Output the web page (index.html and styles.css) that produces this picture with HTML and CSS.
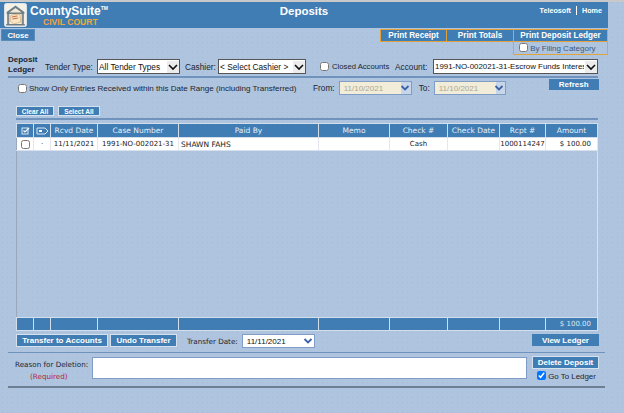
FILE: index.html
```html
<!DOCTYPE html>
<html lang="en">
<head>
    <meta charset="UTF-8">
    <meta name="viewport" content="width=device-width, initial-scale=1.0">
    <title>Deposits</title>
    <link rel="stylesheet" href="styles.css">
</head>
<body>
    <!-- Banner -->
    <header class="banner">
        <div class="brand">
            <svg class="brand-logo" width="23" height="24" viewBox="0 0 26 24" preserveAspectRatio="none">
                <rect x="0.5" y="0.5" width="25" height="23" rx="2" fill="#f4f1e6" stroke="#dfe6ee"/>
                <path d="M3 9 L13 2.5 L23 9 L23 11 L3 11 Z" fill="#6f7d86"/>
                <path d="M6 9.5 L13 5 L20 9.5 Z" fill="#efe8d6"/>
                <rect x="3.5" y="11" width="2.5" height="10" fill="#7f8b92"/>
                <rect x="20" y="11" width="2.5" height="10" fill="#7f8b92"/>
                <path d="M8 12 L18 11 L19 19 L11 21 L7 18 Z" fill="#f7e6c8" stroke="#d9a05c" stroke-width="0.7"/>
                <path d="M9 14 L15 13 M9.5 16 L16 15" stroke="#c9683f" stroke-width="1"/>
                <rect x="2.5" y="21" width="21" height="1.5" fill="#6f7d86"/>
            </svg>
            <div class="brand-text">
                <div class="brand-name">CountySuite<sup>TM</sup></div>
                <div class="brand-sub">CIVIL COURT</div>
            </div>
        </div>
        <h1 class="page-title">Deposits</h1>
        <nav class="top-links"><a>Teleosoft</a><a>Home</a></nav>
    </header>

    <!-- Close + print buttons -->
    <div class="toolbar">
        <button class="btn btn-close" type="button">Close</button>
        <div class="print-group">
            <div class="print-tabs">
                <button class="print-tab tab-receipt" type="button">Print Receipt</button>
                <button class="print-tab tab-totals" type="button">Print Totals</button>
                <button class="print-tab tab-ledger" type="button">Print Deposit Ledger</button>
            </div>
            <label class="by-filing"><input type="checkbox"> By Filing Category</label>
        </div>
    </div>

    <!-- Filters -->
    <div class="filter-row">
        <div class="ledger-title">Deposit<br>Ledger</div>
        <label class="field field-tender">Tender Type:
            <span class="pick pick-tender">
                <select><option>All Tender Types</option></select>
                <svg width="12" height="12" viewBox="0 0 12 12"><path d="M2 4 L6 8 L10 4" fill="none" stroke="#111" stroke-width="1.6"/></svg>
            </span>
        </label>
        <label class="field field-cashier">Cashier:
            <span class="pick pick-cashier">
                <select><option>&lt; Select Cashier &gt;</option></select>
                <svg width="12" height="12" viewBox="0 0 12 12"><path d="M2 4 L6 8 L10 4" fill="none" stroke="#111" stroke-width="1.6"/></svg>
            </span>
        </label>
        <label class="field field-closed"><input type="checkbox"> Closed Accounts</label>
        <label class="field field-account">Account:
            <span class="pick pick-account">
                <select><option>1991-NO-002021-31-Escrow Funds Interest</option></select>
                <svg width="12" height="12" viewBox="0 0 12 12"><path d="M2 4 L6 8 L10 4" fill="none" stroke="#111" stroke-width="1.6"/></svg>
            </span>
        </label>
    </div>

    <div class="date-row">
        <label class="field field-range"><input type="checkbox"> Show Only Entries Received within this Date Range (including Transferred)</label>
        <label class="field field-from">From:
            <span class="date-pick is-disabled">11/10/2021<svg width="10" height="8" viewBox="0 0 10 8"><path d="M1.5 2 L5 5.5 L8.5 2" fill="none" stroke="#3b62a8" stroke-width="1.8"/></svg></span>
        </label>
        <label class="field field-to">To:
            <span class="date-pick is-disabled">11/10/2021<svg width="10" height="8" viewBox="0 0 10 8"><path d="M1.5 2 L5 5.5 L8.5 2" fill="none" stroke="#3b62a8" stroke-width="1.8"/></svg></span>
        </label>
        <button class="btn btn-refresh" type="button">Refresh</button>
    </div>

    <div class="select-row">
        <button class="btn btn-small btn-clear" type="button">Clear All</button>
        <button class="btn btn-small btn-select" type="button">Select All</button>
    </div>

    <!-- Deposits grid -->
    <div class="grid-wrap">
        <table class="grid">
            <colgroup>
                <col class="c1"><col class="c2"><col class="c3"><col class="c4"><col class="c5">
                <col class="c6"><col class="c7"><col class="c8"><col class="c9"><col class="c10">
            </colgroup>
            <thead>
                <tr>
                    <th><svg width="9" height="8" viewBox="0 0 9 8"><rect x="1" y="1" width="6" height="6" fill="none" stroke="#dbe8f3"/><path d="M2.5 3.5 L4 5 L8 1" fill="none" stroke="#fff" stroke-width="1.2"/></svg></th>
                    <th><svg width="13" height="8" viewBox="0 0 13 8"><path d="M1 1 H9 L12 4 L9 7 H1 Z" fill="none" stroke="#dbe8f3"/><rect x="3" y="3" width="3" height="2" fill="#fff"/></svg></th>
                    <th>Rcvd Date</th>
                    <th>Case Number</th>
                    <th>Paid By</th>
                    <th>Memo</th>
                    <th>Check #</th>
                    <th>Check Date</th>
                    <th>Rcpt #</th>
                    <th>Amount</th>
                </tr>
            </thead>
            <tbody>
                <tr class="data-row">
                    <td class="center"><input type="checkbox"></td>
                    <td class="center">&middot;</td>
                    <td class="center">11/11/2021</td>
                    <td class="center">1991-NO-002021-31</td>
                    <td>SHAWN FAHS</td>
                    <td></td>
                    <td class="center">Cash</td>
                    <td></td>
                    <td class="center">1000114247</td>
                    <td class="right">$ 100.00</td>
                </tr>
                <tr class="filler-row"><td colspan="10"></td></tr>
            </tbody>
            <tfoot>
                <tr>
                    <td></td><td></td><td></td><td></td><td></td>
                    <td></td><td></td><td></td><td></td><td class="right">$ 100.00</td>
                </tr>
            </tfoot>
        </table>
    </div>

    <div class="transfer-row">
        <button class="btn btn-transfer" type="button">Transfer to Accounts</button>
        <button class="btn btn-undo" type="button">Undo Transfer</button>
        <label class="field field-transfer">Transfer Date:
            <span class="date-pick date-transfer">11/11/2021<svg width="10" height="8" viewBox="0 0 10 8"><path d="M1.5 2 L5 5.5 L8.5 2" fill="none" stroke="#3b62a8" stroke-width="1.8"/></svg></span>
        </label>
        <button class="btn btn-view" type="button">View Ledger</button>
    </div>

    <!-- Delete section -->
    <div class="delete-row">
        <div class="reason-label">Reason for Deletion:<div class="required">(Required)</div></div>
        <textarea class="reason-box"></textarea>
        <div class="delete-actions">
            <button class="btn btn-delete" type="button">Delete Deposit</button>
            <label class="go-ledger"><input type="checkbox" checked> Go To Ledger</label>
        </div>
    </div>
</body>
</html>
```
FILE: styles.css
```css
* {
    box-sizing: border-box;
}
html, body {
    height: 413px;
    overflow: hidden;
}
body {
    margin: 0;
    font-family: "Liberation Sans", Arial, sans-serif;
    font-size: 8.3px;
    color: #1d2530;
    background-color: #afc4de;
    background-image: radial-gradient(circle, #a6bbd8 0.6px, transparent 0.9px);
    background-size: 5px 5px;
    border-top: 2px solid #c9c9c9;
}
button {
    font-family: inherit;
    cursor: pointer;
}
input[type="checkbox"] {
    width: 9px;
    height: 9px;
    margin: 0;
    vertical-align: -1px;
}

/* banner */
.banner {
    display: grid;
    grid-template-columns: 1fr auto 1fr;
    align-items: start;
    width: 608px;
    height: 26px;
    background: #3f7db4;
}
.brand {
    display: flex;
    gap: 3px;
    padding: 1px 0 0 4px;
}
.brand-logo {
    display: block;
}
.brand-name {
    margin-top: 2px;
    font-size: 12px;
    font-weight: bold;
    line-height: 13px;
    color: #fff;
}
.brand-name sup {
    font-size: 5px;
    line-height: 0;
    vertical-align: 5px;
}
.brand-sub {
    margin-left: 13px;
    font-size: 8.6px;
    font-weight: bold;
    line-height: 9px;
    color: #f2a63c;
}
.page-title {
    margin: 3px 0 0;
    font-size: 11.5px;
    font-weight: bold;
    color: #fff;
}
.top-links {
    display: flex;
    justify-content: flex-end;
    align-items: center;
    gap: 5px;
    padding: 4px 6px 0 0;
    font-size: 7.2px;
    font-weight: bold;
    color: #fff;
}
.top-links a + a {
    padding-left: 5px;
    border-left: 1px solid #fff;
}

/* buttons */
.btn {
    padding: 0;
    border: 1px solid #d6e1ee;
    background: #3f7db4;
    color: #fff;
    font-weight: bold;
    font-size: 8px;
    white-space: nowrap;
}

/* toolbar */
.toolbar {
    display: flex;
    justify-content: space-between;
    align-items: flex-start;
    width: 608px;
    height: 26px;
}
.btn-close {
    width: 34px;
    height: 12px;
    margin: 1px 0 0 1px;
    border-color: #5a8cba;
    font-size: 7.8px;
}
.print-group {
    width: 228px;
}
.print-tabs {
    display: flex;
    height: 13px;
    margin-top: 1px;
}
.print-tab {
    height: 13px;
    padding: 0;
    border: 1px solid #e3a33c;
    border-left-width: 0;
    background: #3f7db4;
    color: #fff;
    font-weight: bold;
    font-size: 8.2px;
    white-space: nowrap;
}
.tab-receipt {
    width: 67px;
    border-left-width: 1px;
}
.tab-totals {
    width: 67px;
}
.tab-ledger {
    width: 94px;
}
.by-filing {
    display: block;
    width: 95px;
    height: 13px;
    margin-left: auto;
    padding: 1px 0 0 5px;
    border: 1px solid #e3a33c;
    border-top: 0;
    font-size: 8px;
    color: #3f5a80;
    white-space: nowrap;
}

/* filter rows */
.filter-row {
    display: flex;
    align-items: flex-end;
    width: 590px;
    height: 24px;
    margin-left: 8px;
    padding-bottom: 2px;
    border-bottom: 2px solid #6f93bd;
}
.ledger-title {
    width: 37px;
    margin-bottom: -1px;
    font-size: 8px;
    font-weight: bold;
    line-height: 10px;
    color: #1d2530;
}
.field {
    display: flex;
    align-items: center;
    white-space: nowrap;
}
.field-tender {
    width: 135px;
    justify-content: space-between;
}
.field-cashier {
    width: 121px;
    justify-content: space-between;
    margin-left: 5px;
}
.field-closed {
    gap: 3px;
    margin-left: 14px;
    height: 15px;
    font-size: 7.7px;
}
.field-account {
    width: 203px;
    justify-content: space-between;
    margin-left: auto;
}
.pick {
    position: relative;
    display: block;
    height: 15px;
}
.pick select {
    display: block;
    width: 100%;
    height: 100%;
    padding: 0 13px 0 1px;
    border: 1px solid #555;
    border-radius: 0;
    background: #fff;
    appearance: none;
    font-family: inherit;
    font-size: 8.3px;
    color: #111;
}
.pick svg {
    position: absolute;
    top: 2px;
    right: 1px;
    background: #ececec;
    pointer-events: none;
}
.pick-tender {
    width: 83px;
}
.pick-cashier {
    width: 88px;
}
.pick-account {
    width: 165px;
}
.pick-account select {
    font-size: 7.9px;
}
.date-row {
    display: flex;
    align-items: flex-start;
    width: 582px;
    height: 27px;
    margin-left: 18px;
    padding-top: 3px;
}
.field-range {
    gap: 2px;
    width: 295px;
    height: 14px;
    font-size: 8.05px;
}
.field-from {
    gap: 4px;
}
.field-to {
    gap: 4px;
    margin-left: 7px;
}
.date-pick {
    display: flex;
    justify-content: space-between;
    align-items: center;
    width: 73px;
    height: 14px;
    padding: 0 1px 0 4px;
    border: 1px solid #7f9dc7;
    background: #fff;
    font-size: 8px;
    color: #111;
}
.field-to .date-pick {
    width: 72px;
}
.date-pick.is-disabled {
    background: linear-gradient(to right, #f2edd9 0 61px, #c8d6ea 61px);
    color: #a9a794;
}
.btn-refresh {
    width: 50px;
    height: 11px;
    margin: -2px 0 0 43px;
    border: 0;
}
.select-row {
    display: flex;
    gap: 4px;
    width: 582px;
    height: 13px;
    margin-left: 16px;
    padding-top: 1px;
}
.btn-small {
    height: 10px;
    font-size: 6.6px;
}
.btn-clear {
    width: 38px;
}
.btn-select {
    width: 42px;
}

/* grid */
.grid-wrap {
    width: 582px;
    height: 213px;
    margin-left: 16px;
    padding-top: 3px;
    border-top: 2px solid #6f93bd;
}
.grid {
    width: 100%;
    height: 208px;
    border-collapse: collapse;
    table-layout: fixed;
    border-left: 1px solid #9aa8bd;
    border-right: 1px solid #d7e0ec;
    font-family: "DejaVu Sans", Verdana, sans-serif;
    font-size: 7.5px;
}
.c1, .c2 {
    width: 17px;
}
.c3 {
    width: 47px;
}
.c4 {
    width: 81px;
}
.c5 {
    width: 140px;
}
.c6 {
    width: 71px;
}
.c7 {
    width: 58px;
}
.c8 {
    width: 52px;
}
.c9 {
    width: 46px;
}
.grid th {
    height: 14px;
    padding: 0;
    border: 1px solid #d3deeb;
    background: #3f7db4;
    color: #e6eff7;
    font-weight: normal;
}
.grid th svg {
    display: block;
    margin: auto;
}
.data-row td {
    height: 13px;
    padding: 0 2px;
    border-right: 1px solid #e6e6ee;
    border-bottom: 1px solid #d7e0ec;
    background: #fff;
    color: #222;
    white-space: nowrap;
    overflow: hidden;
}
.data-row td.center {
    padding: 0;
    font-size: 7px;
    text-align: center;
}
.data-row input {
    display: block;
    margin: auto;
    width: 9px;
    height: 9px;
}
.right {
    text-align: right;
}
.data-row td.right {
    padding-right: 6px;
    font-size: 7px;
}
.filler-row td {
    padding: 0;
}
.grid tfoot td {
    height: 13px;
    padding: 0 6px 0 0;
    border: 1px solid #d3deeb;
    background: #3f7db4;
    color: #dce8f2;
    font-size: 7px;
}

/* bottom */
.transfer-row {
    display: flex;
    align-items: flex-start;
    width: 597px;
    height: 22px;
    margin-left: 8px;
    padding: 3px 0 0 8px;
    border-bottom: 1px solid #6f93bd;
}
.btn-transfer {
    width: 92px;
    height: 13px;
}
.btn-undo {
    width: 67px;
    height: 13px;
    margin-left: 2px;
}
.field-transfer {
    gap: 4px;
    margin-left: 10px;
    font-family: "DejaVu Sans", Verdana, sans-serif;
    font-size: 7.2px;
}
.date-transfer {
    font-family: "Liberation Sans", Arial, sans-serif;
}
.btn-view {
    width: 67px;
    height: 12px;
    margin-left: auto;
    margin-right: 6px;
    border: 0;
}
.delete-row {
    display: flex;
    align-items: flex-start;
    width: 597px;
    height: 35px;
    margin-left: 8px;
    padding: 4px 0 0 7px;
    border-bottom: 2px solid #6f7f93;
}
.reason-label {
    width: 77px;
    padding-top: 2px;
    font-family: "DejaVu Sans", Verdana, sans-serif;
    font-size: 7.2px;
    line-height: 12px;
    white-space: nowrap;
}
.required {
    padding-left: 15px;
    color: #b5293a;
}
.reason-box {
    width: 435px;
    height: 22px;
    margin: 0;
    padding: 0;
    border: 1px solid #7f9dc7;
    background: #fff;
    resize: none;
}
.delete-actions {
    width: 67px;
    margin: -1px 0 0 5px;
}
.btn-delete {
    display: block;
    width: 67px;
    height: 13px;
}
.go-ledger {
    display: block;
    margin: 2px 0 0 5px;
    font-size: 7.9px;
    white-space: nowrap;
}
```
